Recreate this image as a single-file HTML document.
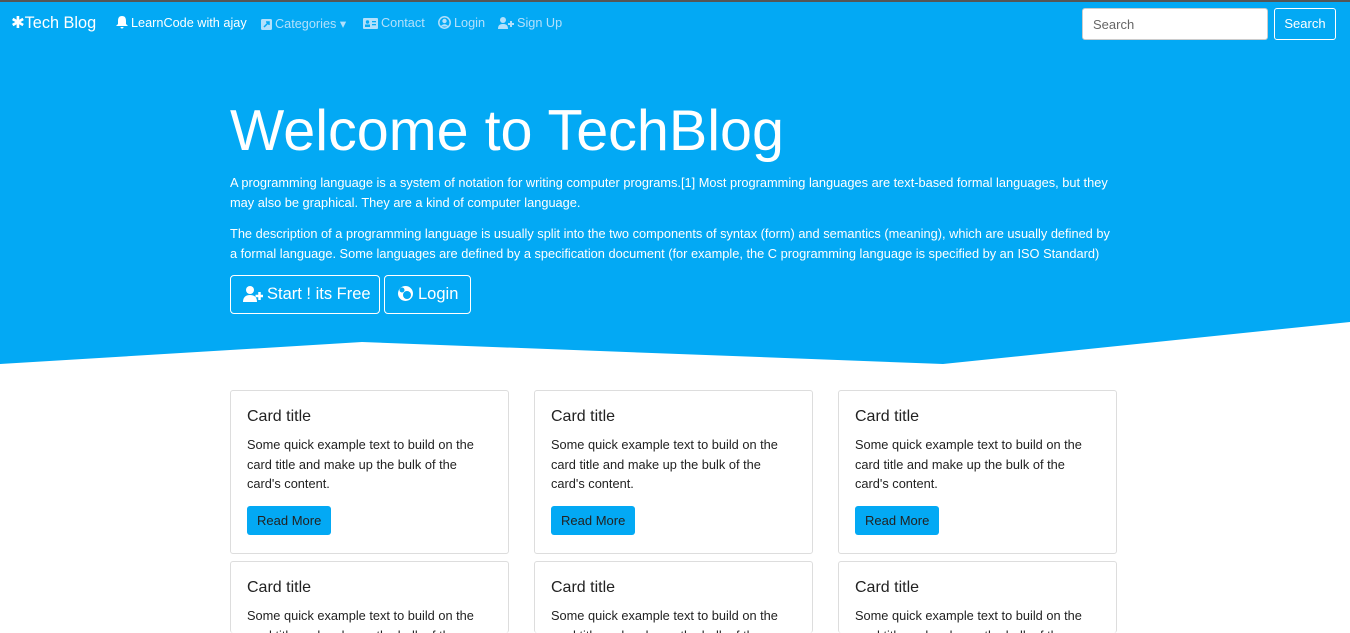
<!DOCTYPE html>
<html><head><style>
*{box-sizing:border-box}
html,body{margin:0;width:1350px;height:633px;overflow:hidden}
body{font-family:"Liberation Sans",sans-serif;background:#fff;position:relative}
.top{position:absolute;left:0;top:0;width:1350px;height:2px;background:#555}
.bg{position:absolute;left:0;top:0}
nav{position:absolute;top:2px;left:0;width:1350px;height:44px;color:#fff}
.brand{position:absolute;left:11px;top:11px;font-size:16.3px;white-space:nowrap}
.nl{position:absolute;top:14px;font-size:12.7px;color:#b3e0fb;white-space:nowrap}
.nl svg{vertical-align:-2px;margin-right:3px}
.s{position:absolute;left:1082px;top:6px;width:186px;height:32px;background:#fff;border-radius:3px;font-size:13px;color:#666;padding:8px 10px;border:1px solid #ccc}
.sb{position:absolute;left:1274px;top:6px;width:62px;height:32px;border:1px solid #fff;border-radius:3px;color:#fff;font-size:13px;text-align:center;line-height:30px}
.hero{position:absolute;left:230px;top:96px;width:900px;color:#fff}
h1{font-weight:400;font-size:57.5px;margin:0 0 7px;line-height:70px}
p.h{font-size:12.8px;line-height:20px;margin:0 0 11px;white-space:nowrap}
.btn{position:absolute;top:179px;height:39px;border:1px solid #fff;border-radius:4px;font-size:16.5px;line-height:37px;padding:0 12px;white-space:nowrap}
.btn svg{vertical-align:-3px;margin-right:4px}
.card{position:absolute;width:279px;height:164px;border:1px solid #ddd;border-radius:3px;padding:17px 16px 16px;color:#222;overflow:hidden}
.card h5{margin:0 0 9px;font-size:16px;font-weight:400}
.card p{margin:0 0 12px;font-size:12.8px;line-height:19.5px}
.rb{display:inline-block;background:#03a9f4;color:#222;font-size:13px;padding:7px 10px;border-radius:3px}
</style></head><body>
<svg class="bg" width="1350" height="370"><polygon points="0,0 1350,0 1350,322 943,364 362,342 0,364" fill="#03a9f4"/></svg>
<div class="top"></div>
<nav>
<div class="brand">✱Tech Blog</div>
<div class="nl" style="left:116px;color:#fff"><svg width="12" height="13" viewBox="0 0 12 13"><path d="M6 0c-3 0-4 2-4 5v3L0 10h12l-2-2V5C10 2 9 0 6 0zM4.5 11h3a1.5 1.5 0 01-3 0z" fill="#fff"/></svg>LearnCode with ajay</div>
<div class="nl" style="left:261px"><svg width="11" height="11"><rect width="11" height="11" rx="1.5" fill="#b3e0fb"/><path d="M3 8l5-5M5 3h3v3" stroke="#03a9f4" stroke-width="1.5" fill="none"/></svg>Categories ▾</div>
<div class="nl" style="left:363px"><svg width="15" height="11"><rect width="15" height="11" rx="1" fill="#b3e0fb"/><circle cx="4.5" cy="4" r="1.7" fill="#03a9f4"/><rect x="2" y="6.5" width="5" height="2.5" fill="#03a9f4"/><rect x="9" y="3" width="4" height="1.3" fill="#03a9f4"/><rect x="9" y="6" width="4" height="1.3" fill="#03a9f4"/></svg>Contact</div>
<div class="nl" style="left:438px"><svg width="13" height="13"><circle cx="6.5" cy="6.5" r="5.7" stroke="#b3e0fb" stroke-width="1.5" fill="none"/><circle cx="6.5" cy="5" r="2.2" fill="#b3e0fb"/><path d="M2.5 10.5c2-3 6-3 8 0" fill="#b3e0fb"/></svg>Login</div>
<div class="nl" style="left:498px"><svg width="16" height="12"><circle cx="5" cy="3" r="3" fill="#b3e0fb"/><path d="M0 12c0-4 2-5 5-5s5 1 5 5z" fill="#b3e0fb"/><path d="M13 4v6M10 7h6" stroke="#b3e0fb" stroke-width="2"/></svg>Sign Up</div>
<div class="s">Search</div><div class="sb">Search</div>
</nav>
<div class="hero">
<h1>Welcome to TechBlog</h1>
<p class="h">A programming language is a system of notation for writing computer programs.[1] Most programming languages are text-based formal languages, but they<br>may also be graphical. They are a kind of computer language.</p>
<p class="h">The description of a programming language is usually split into the two components of syntax (form) and semantics (meaning), which are usually defined by<br>a formal language. Some languages are defined by a specification document (for example, the C programming language is specified by an ISO Standard)</p>
<div class="btn" style="left:0;width:150px"><svg width="20" height="16"><circle cx="7" cy="4" r="4" fill="#fff"/><path d="M0 16c0-5 3-7 7-7s7 2 7 7z" fill="#fff"/><path d="M16.5 6v8M12.5 10h8" stroke="#fff" stroke-width="2.5"/></svg>Start ! its Free</div>
<div class="btn" style="left:154px;width:87px"><svg width="17" height="17"><circle cx="8.5" cy="8.5" r="7.5" fill="#fff"/><circle cx="10" cy="10" r="4" fill="#03a9f4"/><circle cx="5" cy="5" r="2.5" fill="#03a9f4"/></svg>Login</div>
</div>
<div class="card" style="left:230px;top:390px"><h5>Card title</h5><p>Some quick example text to build on the card title and make up the bulk of the card's content.</p><span class="rb">Read More</span></div>
<div class="card" style="left:534px;top:390px"><h5>Card title</h5><p>Some quick example text to build on the card title and make up the bulk of the card's content.</p><span class="rb">Read More</span></div>
<div class="card" style="left:838px;top:390px"><h5>Card title</h5><p>Some quick example text to build on the card title and make up the bulk of the card's content.</p><span class="rb">Read More</span></div>
<div class="card" style="left:230px;top:561px;height:72px;border-bottom:0"><h5>Card title</h5><p>Some quick example text to build on the card title and make up the bulk of the card's content.</p></div>
<div class="card" style="left:534px;top:561px;height:72px;border-bottom:0"><h5>Card title</h5><p>Some quick example text to build on the card title and make up the bulk of the card's content.</p></div>
<div class="card" style="left:838px;top:561px;height:72px;border-bottom:0"><h5>Card title</h5><p>Some quick example text to build on the card title and make up the bulk of the card's content.</p></div>
</body></html>
